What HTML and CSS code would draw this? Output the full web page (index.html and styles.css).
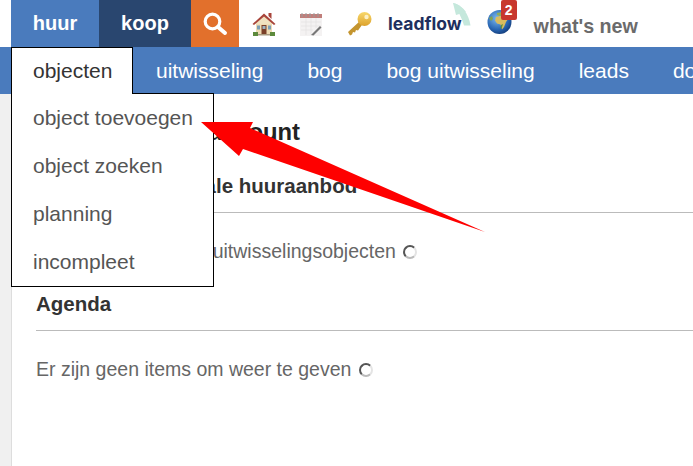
FILE: index.html
```html
<!DOCTYPE html>
<html lang="nl">
<head>
<meta charset="utf-8">
<title>Account</title>
<link rel="stylesheet" href="styles.css">
</head>
<body>
<header class="topbar">
  <a class="tab tab-huur">huur</a>
  <a class="tab tab-koop">koop</a>
  <a class="tab-search" aria-label="zoeken">
    <svg width="26" height="24" viewBox="0 0 26 24"><circle cx="10.500" cy="9.500" r="7.300" fill="none" stroke="#fff" stroke-width="3.200"/><path d="M16 15l7 6" stroke="#fff" stroke-width="4" stroke-linecap="round"/></svg>
  </a>
  <span class="icon icon-house">
    <svg width="24" height="24" viewBox="0 0 24 24"><path d="M4 10h16v12H4z" fill="#eedcb4"/><path d="M12 3L21 12H3z" fill="#f0e2c0"/><path d="M.5 12L12 1.500 23.500 12l-1.500 1L12 4.500 2 13z" fill="#a8443a"/><path d="M16.500 1h3v6l-3-3z" fill="#a8443a"/><path d="M9.500 13h5v9h-5z" fill="#7a3f28"/><path d="M5 13.500h3v4H5zM16 13.500h3v4h-3z" fill="#7d9fb6"/><path d="M10.500 14h3v3h-3z" fill="#9db4c2"/><path d="M1 20h5v4H1zM18 20h5v4h-5z" fill="#5d8a3c"/><path d="M6 22h12v1.500H6z" fill="#a89a80"/></svg>
  </span>
  <span class="icon icon-note">
    <svg width="22" height="24" viewBox="0 0 22 24"><path d="M0 2h22v22H0z" fill="#f4f2f2"/><path d="M0 2h22v4H0z" fill="#c07e7a"/><path d="M2 1v4M6 1v4M10 1v4M14 1v4M18 1v4" stroke="#999" stroke-width="1"/><path d="M1 10h20M1 14h20M1 18h12M6 6v17M11 6v17M16 6v10" stroke="#e2e2e2" stroke-width=".7"/><path d="M11 23l9-9 1.500 1.500-8 8z" fill="#777"/></svg>
  </span>
  <span class="icon icon-key">
    <svg width="25" height="24" viewBox="0 0 25 24"><defs><linearGradient id="gold" x1="0" y1="0" x2="0" y2="1"><stop offset="0" stop-color="#f8d86c"/><stop offset="1" stop-color="#dda22c"/></linearGradient></defs><path d="M13 9L1 20l2 3.500 2-1 1-2.500 2 .5 1-2.500 2 .5 5-7z" fill="#c4952f"/><circle cx="17.500" cy="7" r="7" fill="url(#gold)"/><circle cx="19.500" cy="5" r="2.200" fill="#fdf0c4"/></svg>
  </span>
  <span class="leadflow">
    <svg class="leaf" width="18" height="23" viewBox="0 0 18 23"><path d="M0 0C9 2 16 11 17.500 22.500L11 22.500C9 15 5 8 0 0z" fill="#c5e8dc"/><path d="M0 0C6 1 10 5 13 9L3 12z" fill="#c5e8dc"/></svg>
    <span class="leadflow-text">leadflow</span>
  </span>
  <span class="icon icon-globe">
    <svg width="25" height="24" viewBox="0 0 25 24"><defs><radialGradient id="sea" cx=".4" cy=".35" r=".7"><stop offset="0" stop-color="#7fbcef"/><stop offset=".65" stop-color="#2a68b5"/><stop offset="1" stop-color="#123a78"/></radialGradient></defs><circle cx="12.500" cy="12" r="12" fill="url(#sea)"/><path d="M9 7l4-1 5 1 3 2-2 3-2 5-2 2.500-1.500-5-3.500-1-2-3z" fill="#d9bc5e"/><path d="M14 15l2-1-1.500 5-1-1z" fill="#5f8f3c"/><path d="M10 3l5-1 3 2-5 2-3-1z" fill="#8fae58"/><path d="M2 8l3-2 1 3-2 2z" fill="#7fa352"/></svg>
    <span class="badge">2</span>
  </span>
  <span class="whatsnew">what's new</span>
</header>

<nav class="subnav">
  <a class="subitem subitem-active">objecten</a>
  <a class="subitem">uitwisseling</a>
  <a class="subitem">bog</a>
  <a class="subitem">bog uitwisseling</a>
  <a class="subitem">leads</a>
  <a class="subitem">documenten</a>
</nav>

<main class="page">
  <h1 class="title">Welkom op uw account</h1>
  <h2 class="section-title">Mijn overzicht totale huuraanbod</h2>
  <p class="empty">Er zijn geen actuele uitwisselingsobjecten <span class="spinner"></span></p>
  <h2 class="section-title">Agenda</h2>
  <p class="empty">Er zijn geen items om weer te geven <span class="spinner"></span></p>
</main>

<ul class="menu">
  <li class="menu-item">object toevoegen</li>
  <li class="menu-item">object zoeken</li>
  <li class="menu-item">planning</li>
  <li class="menu-item">incompleet</li>
</ul>

<svg class="arrow" width="693" height="466" viewBox="0 0 693 466"><path d="M201 122L253 122 250 128 485 232 243 149 239 156z" fill="#fe0000"/></svg>
</body>
</html>
```
FILE: styles.css
```css
html, body { margin: 0; padding: 0; height: 100%; overflow: hidden; }
body { position: relative; background: #f0f0f0; font-family: "Liberation Sans", Arial, sans-serif; }

.topbar { display: flex; align-items: center; height: 47px; padding-left: 11px; background: #fff; }
.tab { display: flex; align-items: center; justify-content: center; height: 47px; font-size: 20px; font-weight: 700; color: #fff; }
.tab-huur { width: 88px; background: #4a7bbd; }
.tab-koop { width: 92px; background: #29466f; }
.tab-search { display: flex; align-items: center; justify-content: center; width: 48px; height: 47px; background: #e2702c; }
.icon { display: flex; }
.icon-house { margin-left: 13px; }
.icon-note { margin-left: 24px; }
.icon-key { margin-left: 25px; }
.leadflow { position: relative; display: flex; align-items: center; margin-left: 16px; }
.leaf { position: absolute; left: 65px; top: -10px; }
.leadflow-text { position: relative; font-family: Inter, "Liberation Sans", sans-serif; font-size: 17.500px; font-weight: 700; color: #1e2f5e; }
.icon-globe { position: relative; margin-left: 25px; margin-top: -3px; }
.badge { position: absolute; left: 14px; top: -10px; width: 16px; height: 20px; border-radius: 2px; background: #c8372d; color: #fff; font-size: 14px; font-weight: 700; line-height: 20px; text-align: center; }
.whatsnew { margin-left: 22px; margin-top: 5px; font-size: 19.700px; font-weight: 700; color: #6b6b6b; }

.subnav { display: flex; height: 47px; padding-left: 11px; background: #4a7bbd; overflow: hidden; }
.subitem { display: flex; flex: none; align-items: center; padding: 0 22px; font-size: 21px; color: #fff; white-space: nowrap; }
.subitem-active { position: relative; z-index: 3; box-sizing: border-box; width: 122px; padding: 0 0 0 21px; height: 47px; background: #fff; color: #333; border: 1px solid #000; border-bottom: 0; }
.subitem-active + .subitem { padding-left: 23px; }

.page { box-sizing: border-box; margin-left: 11px; height: 372px; padding: 22px 0 0 24px; background: #fff; border-left: 1px solid #ddd; }
.title { margin: 0 0 28px; font-size: 23.800px; line-height: 32px; font-weight: 700; color: #222; white-space: nowrap; }
.section-title { margin: 0; padding-bottom: 16px; font-size: 20.500px; line-height: 20px; font-weight: 700; color: #333; border-bottom: 1px solid #bbb; white-space: nowrap; }
.empty { margin: 28px 0 33px; font-size: 19.500px; line-height: 20px; color: #666; white-space: nowrap; }
.spinner { display: inline-block; box-sizing: border-box; width: 14px; height: 14px; margin-left: 2px; vertical-align: -1px; border: 2px solid #555; border-right-color: #e4e4e4; border-bottom-color: #bbb; border-radius: 50%; }

.menu { position: absolute; left: 11px; top: 93px; z-index: 2; box-sizing: border-box; width: 203px; height: 194px; margin: 0; padding: 0; list-style: none; background: #fff; border: 1px solid #000; }
.menu-item { padding-left: 21px; font-size: 21px; line-height: 48px; color: #555; }

.arrow { position: absolute; left: 0; top: 0; z-index: 4; pointer-events: none; }
```
